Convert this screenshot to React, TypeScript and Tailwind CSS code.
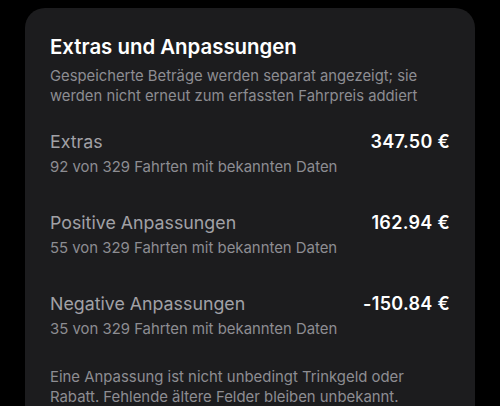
import React from "react";

type Row = { label: string; value: string; note: string };

const rows: Row[] = [
  { label: "Extras", value: "347.50 €", note: "92 von 329 Fahrten mit bekannten Daten" },
  { label: "Positive Anpassungen", value: "162.94 €", note: "55 von 329 Fahrten mit bekannten Daten" },
  { label: "Negative Anpassungen", value: "-150.84 €", note: "35 von 329 Fahrten mit bekannten Daten" },
];

export default function App() {
  return (
    <div
      className="w-[500px] h-[406px] overflow-hidden bg-black px-[25px] pt-[8px]"
      style={{ fontFamily: "Inter, 'Noto Sans', sans-serif" }}
    >
      <div className="rounded-[20px] bg-[#1c1c1e] px-[25px] pt-[26px] pb-[24px]">
        <h2 className="text-[20.4px] leading-[26px] font-semibold text-white">
          Extras und Anpassungen
        </h2>
        <p className="mt-[6px] text-[14.8px] leading-[20px] text-[#8d8d92]">
          Gespeicherte Beträge werden separat angezeigt; sie werden nicht erneut zum erfassten Fahrpreis addiert
        </p>
        <div className="mt-[25px] flex flex-col gap-[35px]">
          {rows.map((r) => (
            <div key={r.label} className="flex flex-col">
              <div className="flex items-baseline justify-between">
                <span className="text-[17.8px] leading-[22px] text-[#a1a1a6]">{r.label}</span>
                <span className="text-[18px] leading-[22px] font-semibold text-white tracking-[0.3px]">{r.value}</span>
              </div>
              <span className="mt-[4px] text-[14.9px] leading-[20px] text-[#8d8d92]">{r.note}</span>
            </div>
          ))}
        </div>
        <p className="mt-[28px] text-[14.9px] leading-[20px] text-[#8d8d92]">
          Eine Anpassung ist nicht unbedingt Trinkgeld oder Rabatt. Fehlende ältere Felder bleiben unbekannt.
        </p>
      </div>
    </div>
  );
}
